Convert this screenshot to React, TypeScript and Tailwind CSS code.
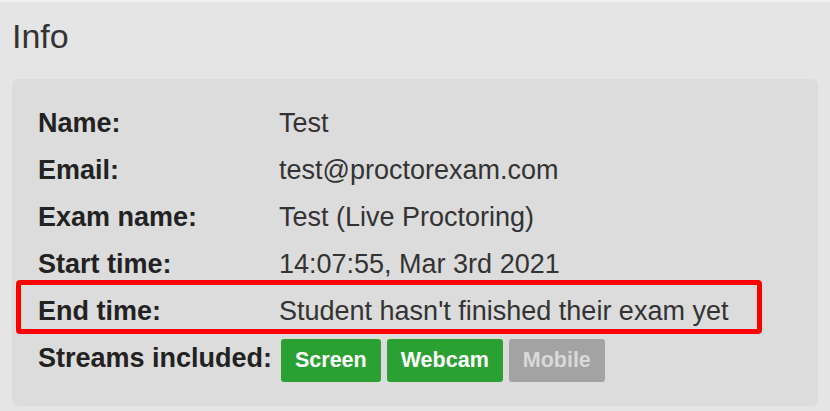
import React from 'react';

interface InfoRowProps {
  label: string;
  value: string;
  highlighted?: boolean;
}

const InfoRow: React.FC<InfoRowProps> = ({ label, value, highlighted }) => {
  return (
    <div className="relative flex h-[47px] items-center">
      <div className="w-[241px] shrink-0 text-[27px] font-bold leading-[31px] text-[#222]">{label}</div>
      <div className="text-[27px] leading-[31px] text-[#333]">{value}</div>
      {highlighted && (
        <div className="absolute left-[-22px] top-[-8.5px] h-[54px] w-[746px] rounded-[4px] border-[5px] border-[#ff0000]" />
      )}
    </div>
  );
};

const StreamBadge: React.FC<{ name: string; active: boolean }> = ({ name, active }) => {
  return (
    <span
      className={
        active
          ? 'flex h-[43px] items-center rounded-[3px] bg-[#2ba133] px-[14px] text-[21.5px] font-bold text-white'
          : 'flex h-[43px] items-center rounded-[3px] bg-[#a3a3a3] px-[14px] text-[21.5px] font-bold text-[#d9d9d9]'
      }
    >
      {name}
    </span>
  );
};

export default function App() {
  return (
    <div
      className="h-[411px] w-[830px] overflow-hidden border-t-2 border-[#f0f0f0] bg-[#e5e5e5]"
      style={{ fontFamily: '"Liberation Sans", Arial, sans-serif' }}
    >
      <h2 className="pl-[12px] pt-[14px] text-[34px] leading-[40px] text-[#333]">Info</h2>

      <div className="ml-[12px] mt-[23px] w-[806px] rounded-[6px] bg-[#dcdcdc] pb-[24px] pl-[26px] pt-[21px]">
        <InfoRow label="Name:" value="Test" />
        <InfoRow label="Email:" value="test@proctorexam.com" />
        <InfoRow label="Exam name:" value="Test (Live Proctoring)" />
        <InfoRow label="Start time:" value="14:07:55, Mar 3rd 2021" />
        <InfoRow label="End time:" value="Student hasn't finished their exam yet" highlighted />

        <div className="mt-[4px] flex items-baseline">
          <div className="w-[243px] shrink-0 text-[27px] font-bold leading-[31px] text-[#222]">Streams included:</div>
          <div className="flex items-baseline gap-[6px]">
            <StreamBadge name="Screen" active />
            <StreamBadge name="Webcam" active />
            <StreamBadge name="Mobile" active={false} />
          </div>
        </div>
      </div>
    </div>
  );
}
